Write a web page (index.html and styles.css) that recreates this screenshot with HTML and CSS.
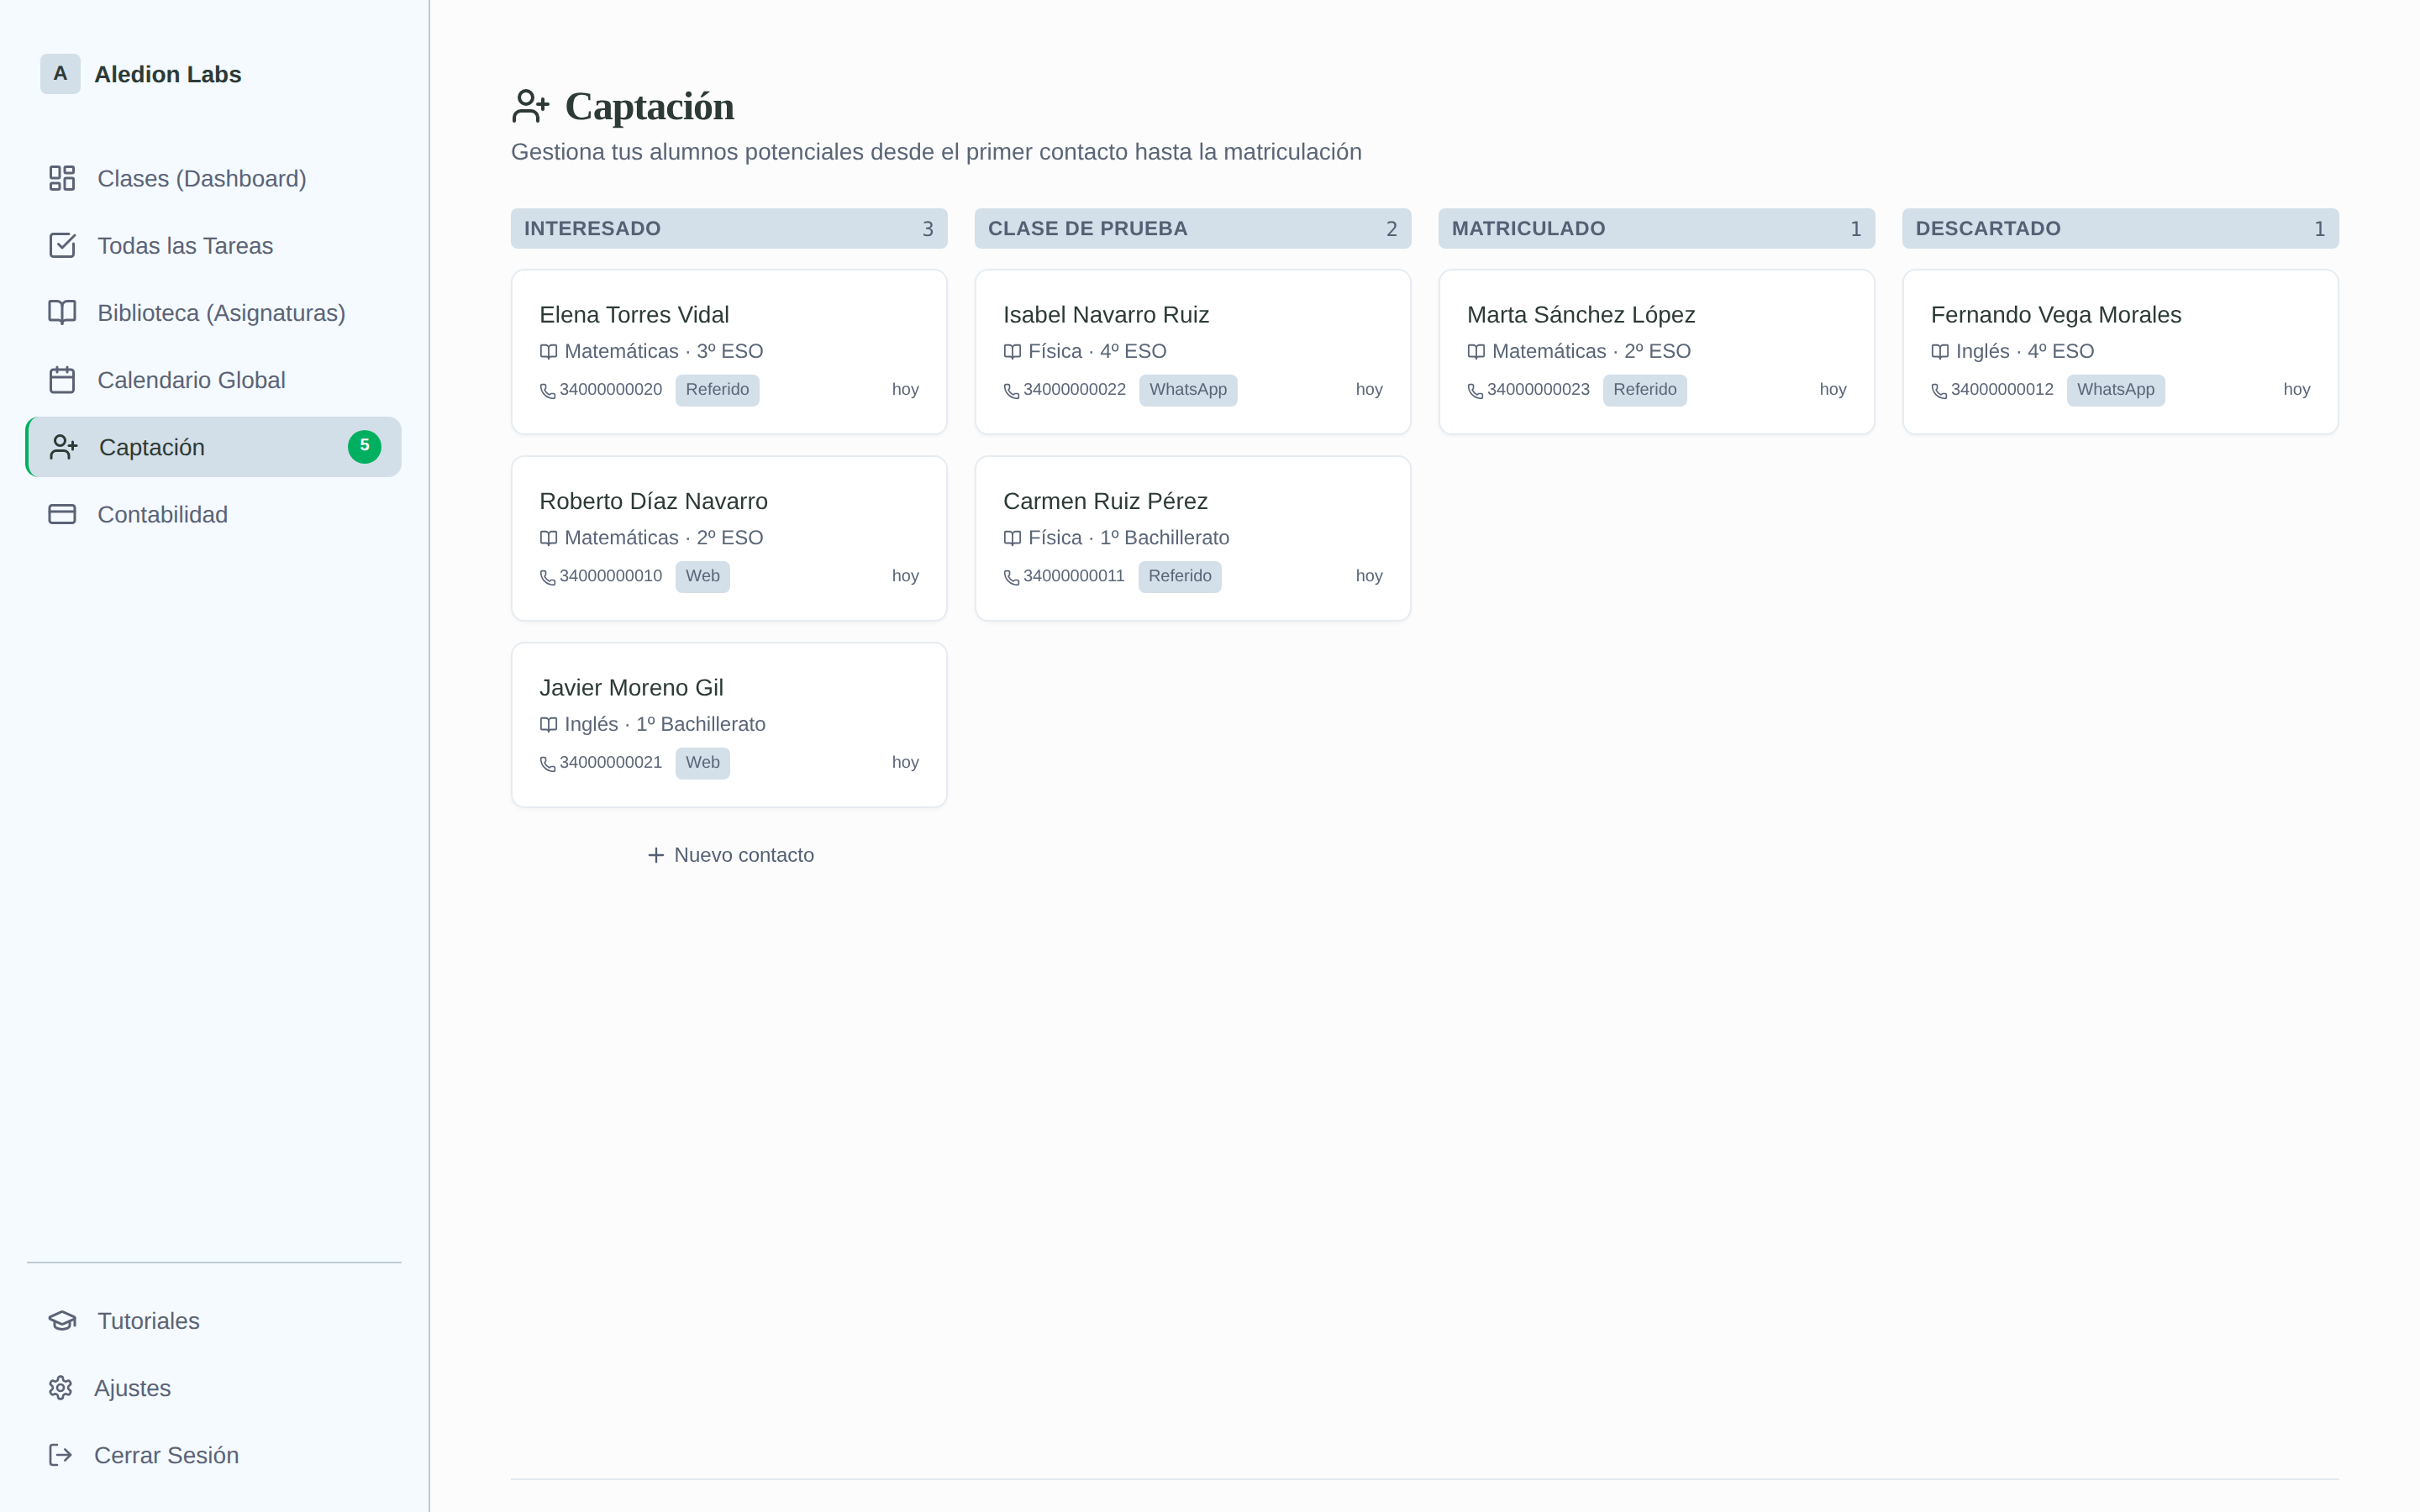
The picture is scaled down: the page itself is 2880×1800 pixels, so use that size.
FILE: index.html
```html
<!DOCTYPE html>
<html lang="es">
<head>
<meta charset="utf-8">
<title>Captación</title>
<link rel="stylesheet" href="styles.css">
</head>
<body>
<svg class="defs" xmlns="http://www.w3.org/2000/svg">
<symbol id="i-dash" viewBox="0 0 24 24"><rect x="3" y="3" width="7" height="9" rx="1"/><rect x="14" y="3" width="7" height="5" rx="1"/><rect x="14" y="12" width="7" height="9" rx="1"/><rect x="3" y="16" width="7" height="5" rx="1"/></symbol>
<symbol id="i-check" viewBox="0 0 24 24"><path d="M21 10.656V19a2 2 0 0 1-2 2H5a2 2 0 0 1-2-2V5a2 2 0 0 1 2-2h12.344"/><path d="m9 11 3 3L22 4"/></symbol>
<symbol id="i-book" viewBox="0 0 24 24"><path d="M12 7v14"/><path d="M3 18a1 1 0 0 1-1-1V4a1 1 0 0 1 1-1h5a4 4 0 0 1 4 4 4 4 0 0 1 4-4h5a1 1 0 0 1 1 1v13a1 1 0 0 1-1 1h-6a3 3 0 0 0-3 3 3 3 0 0 0-3-3z"/></symbol>
<symbol id="i-cal" viewBox="0 0 24 24"><path d="M8 2v4"/><path d="M16 2v4"/><rect x="3" y="4" width="18" height="18" rx="2"/><path d="M3 10h18"/></symbol>
<symbol id="i-user" viewBox="0 0 24 24"><path d="M16 21v-2a4 4 0 0 0-4-4H6a4 4 0 0 0-4 4v2"/><circle cx="9" cy="7" r="4"/><path d="M19 8v6"/><path d="M22 11h-6"/></symbol>
<symbol id="i-card" viewBox="0 0 24 24"><rect x="2" y="5" width="20" height="14" rx="2"/><path d="M2 10h20"/></symbol>
<symbol id="i-cap" viewBox="0 0 24 24"><path d="M21.42 10.922a1 1 0 0 0-.019-1.838L12.83 5.18a2 2 0 0 0-1.66 0L2.6 9.08a1 1 0 0 0 0 1.832l8.57 3.908a2 2 0 0 0 1.66 0z"/><path d="M22 10v6"/><path d="M6 12.5V16a6 3 0 0 0 12 0v-3.5"/></symbol>
<symbol id="i-gear" viewBox="0 0 24 24"><path d="M12.22 2h-.44a2 2 0 0 0-2 2v.18a2 2 0 0 1-1 1.73l-.43.25a2 2 0 0 1-2 0l-.15-.08a2 2 0 0 0-2.73.73l-.22.38a2 2 0 0 0 .73 2.73l.15.1a2 2 0 0 1 1 1.72v.51a2 2 0 0 1-1 1.74l-.15.09a2 2 0 0 0-.73 2.73l.22.38a2 2 0 0 0 2.73.73l.15-.08a2 2 0 0 1 2 0l.43.25a2 2 0 0 1 1 1.73V20a2 2 0 0 0 2 2h.44a2 2 0 0 0 2-2v-.18a2 2 0 0 1 1-1.73l.43-.25a2 2 0 0 1 2 0l.15.08a2 2 0 0 0 2.73-.73l.22-.39a2 2 0 0 0-.73-2.73l-.15-.08a2 2 0 0 1-1-1.74v-.5a2 2 0 0 1 1-1.74l.15-.09a2 2 0 0 0 .73-2.73l-.22-.38a2 2 0 0 0-2.73-.73l-.15.08a2 2 0 0 1-2 0l-.43-.25a2 2 0 0 1-1-1.73V4a2 2 0 0 0-2-2z"/><circle cx="12" cy="12" r="3"/></symbol>
<symbol id="i-out" viewBox="0 0 24 24"><path d="M9 21H5a2 2 0 0 1-2-2V5a2 2 0 0 1 2-2h4"/><path d="m16 17 5-5-5-5"/><path d="M21 12H9"/></symbol>
<symbol id="i-phone" viewBox="0 0 24 24"><path d="M13.832 16.568a1 1 0 0 0 1.213-.303l.355-.465A2 2 0 0 1 17 15h3a2 2 0 0 1 2 2v3a2 2 0 0 1-2 2A18 18 0 0 1 2 4a2 2 0 0 1 2-2h3a2 2 0 0 1 2 2v3a2 2 0 0 1-.8 1.6l-.468.351a1 1 0 0 0-.292 1.233 14 14 0 0 0 6.392 6.384"/></symbol>
<symbol id="i-plus" viewBox="0 0 24 24"><path d="M5 12h14"/><path d="M12 5v14"/></symbol>
</svg>
<div class="app">
<aside class="sidebar">
  <div class="brand"><span class="brand-mark">A</span><span class="brand-name">Aledion Labs</span></div>
  <nav class="nav">
    <a class="nav-item"><svg class="ico"><use href="#i-dash"/></svg><span class="label">Clases (Dashboard)</span></a>
    <a class="nav-item"><svg class="ico"><use href="#i-check"/></svg><span class="label">Todas las Tareas</span></a>
    <a class="nav-item"><svg class="ico"><use href="#i-book"/></svg><span class="label">Biblioteca (Asignaturas)</span></a>
    <a class="nav-item"><svg class="ico"><use href="#i-cal"/></svg><span class="label">Calendario Global</span></a>
    <a class="nav-item active"><svg class="ico"><use href="#i-user"/></svg><span class="label">Captación</span><b class="nav-badge">5</b></a>
    <a class="nav-item"><svg class="ico"><use href="#i-card"/></svg><span class="label">Contabilidad</span></a>
  </nav>
  <div class="side-foot">
    <a class="nav-item"><svg class="ico"><use href="#i-cap"/></svg><span class="label">Tutoriales</span></a>
    <a class="nav-item small"><svg class="ico"><use href="#i-gear"/></svg><span class="label">Ajustes</span></a>
    <a class="nav-item small"><svg class="ico"><use href="#i-out"/></svg><span class="label">Cerrar Sesión</span></a>
  </div>
</aside>
<main class="main">
  <header class="head">
    <h1 class="title"><svg class="title-ico"><use href="#i-user"/></svg><span class="title-text">Captación</span></h1>
    <p class="sub">Gestiona tus alumnos potenciales desde el primer contacto hasta la matriculación</p>
  </header>
  <section class="board">
    <div class="col">
      <div class="col-head"><span class="col-name">Interesado</span><span class="col-count">3</span></div>
      <article class="card"><h3 class="name">Elena Torres Vidal</h3><div class="meta"><svg class="meta-ico"><use href="#i-book"/></svg><span>Matemáticas · 3º ESO</span></div><div class="row"><span class="tel"><svg class="tel-ico"><use href="#i-phone"/></svg>34000000020</span><span class="tag">Referido</span><span class="when">hoy</span></div></article>
      <article class="card"><h3 class="name">Roberto Díaz Navarro</h3><div class="meta"><svg class="meta-ico"><use href="#i-book"/></svg><span>Matemáticas · 2º ESO</span></div><div class="row"><span class="tel"><svg class="tel-ico"><use href="#i-phone"/></svg>34000000010</span><span class="tag">Web</span><span class="when">hoy</span></div></article>
      <article class="card"><h3 class="name">Javier Moreno Gil</h3><div class="meta"><svg class="meta-ico"><use href="#i-book"/></svg><span>Inglés · 1º Bachillerato</span></div><div class="row"><span class="tel"><svg class="tel-ico"><use href="#i-phone"/></svg>34000000021</span><span class="tag">Web</span><span class="when">hoy</span></div></article>
      <button class="add"><svg class="add-ico"><use href="#i-plus"/></svg><span>Nuevo contacto</span></button>
    </div>
    <div class="col">
      <div class="col-head"><span class="col-name">Clase de prueba</span><span class="col-count">2</span></div>
      <article class="card"><h3 class="name">Isabel Navarro Ruiz</h3><div class="meta"><svg class="meta-ico"><use href="#i-book"/></svg><span>Física · 4º ESO</span></div><div class="row"><span class="tel"><svg class="tel-ico"><use href="#i-phone"/></svg>34000000022</span><span class="tag">WhatsApp</span><span class="when">hoy</span></div></article>
      <article class="card"><h3 class="name">Carmen Ruiz Pérez</h3><div class="meta"><svg class="meta-ico"><use href="#i-book"/></svg><span>Física · 1º Bachillerato</span></div><div class="row"><span class="tel"><svg class="tel-ico"><use href="#i-phone"/></svg>34000000011</span><span class="tag">Referido</span><span class="when">hoy</span></div></article>
    </div>
    <div class="col">
      <div class="col-head"><span class="col-name">Matriculado</span><span class="col-count">1</span></div>
      <article class="card"><h3 class="name">Marta Sánchez López</h3><div class="meta"><svg class="meta-ico"><use href="#i-book"/></svg><span>Matemáticas · 2º ESO</span></div><div class="row"><span class="tel"><svg class="tel-ico"><use href="#i-phone"/></svg>34000000023</span><span class="tag">Referido</span><span class="when">hoy</span></div></article>
    </div>
    <div class="col">
      <div class="col-head"><span class="col-name">Descartado</span><span class="col-count">1</span></div>
      <article class="card"><h3 class="name">Fernando Vega Morales</h3><div class="meta"><svg class="meta-ico"><use href="#i-book"/></svg><span>Inglés · 4º ESO</span></div><div class="row"><span class="tel"><svg class="tel-ico"><use href="#i-phone"/></svg>34000000012</span><span class="tag">WhatsApp</span><span class="when">hoy</span></div></article>
    </div>
  </section>
  <footer class="foot"></footer>
</main>
</div>
</body>
</html>
```
FILE: styles.css
```css
* { box-sizing: border-box; }
html, body { margin: 0; height: 100%; }
body { font-family: "Liberation Sans", Arial, sans-serif; background: #fcfcfc; color: #2d3a35; text-rendering: geometricPrecision; }
.defs { display: none; }
svg { fill: none; stroke: currentColor; stroke-width: 2; stroke-linecap: round; stroke-linejoin: round; flex: none; }
.app { display: flex; height: 1800px; overflow: hidden; }

.sidebar { width: 512px; flex: none; display: flex; flex-direction: column; background: #f4faff; border-right: 2px solid #bccbd8; padding: 64px 32px 0; }
.brand { display: flex; align-items: center; gap: 16px; padding-left: 16px; height: 48px; margin-bottom: 64px; }
.brand-mark { width: 48px; height: 48px; border-radius: 8px; background: #d3dfe8; display: flex; align-items: center; justify-content: center; font-weight: 700; font-size: 24px; }
.brand-name { font-weight: 700; font-size: 28px; padding-top: 2px; }
.nav { display: flex; flex-direction: column; gap: 8px; }
.nav-item { display: flex; align-items: center; gap: 24px; height: 72px; padding: 0 24px; font-size: 28px; color: #5b6376; border-radius: 16px; }
.label { padding-top: 2px; }
.ico { width: 36px; height: 36px; }
.nav-item.small .ico { width: 32px; height: 32px; }
.nav-item.active { background: #d3dfe8; color: #2d3a35; border-left: 4px solid #00b060; margin-left: -2px; }
.nav-badge { margin-left: auto; width: 40px; height: 40px; border-radius: 50%; background: #00b060; color: #fff; font-size: 20px; display: flex; align-items: center; justify-content: center; padding-bottom: 4px; }
.side-foot { margin-top: auto; border-top: 2px solid #bccbd8; padding-top: 32px; padding-bottom: 32px; display: flex; flex-direction: column; gap: 8px; }

.main { flex: 1; min-width: 0; padding: 94px 96px 38px; display: flex; flex-direction: column; }
.head { margin-bottom: 47px; will-change: transform; }
.title { margin: 0 0 3px; height: 64px; display: flex; align-items: center; gap: 16px; font-family: "Liberation Serif", "Times New Roman", serif; font-weight: 700; font-size: 48px; line-height: 62px; letter-spacing: -1px; }
.title-text { padding-top: 2px; }
.title-ico { width: 48px; height: 48px; }
.sub { margin: 0; font-size: 28px; line-height: 40px; color: #5a6577; }
.board { flex: 1; display: grid; grid-template-columns: repeat(4, 520px); gap: 32px; align-items: start; will-change: transform; }
.col { display: flex; flex-direction: column; gap: 24px; }
.col-head { height: 48px; display: flex; align-items: center; justify-content: space-between; padding: 2px 16px 0; background: #d3dfe9; border-radius: 8px; color: #556074; }
.col-name { font-weight: 700; font-size: 24px; letter-spacing: 0.6px; text-transform: uppercase; }
.col-count { font-family: "DejaVu Sans Mono", monospace; font-size: 24px; }
.card { background: #fff; border: 2px solid #e6ecf1; border-radius: 16px; padding: 32px; box-shadow: 0 2px 4px rgba(0, 0, 0, 0.04); }
.name { margin: 0 0 4px; font-weight: 400; font-size: 28px; line-height: 42px; color: #2d3a35; }
.meta { display: flex; align-items: center; gap: 8px; font-size: 24px; line-height: 36px; color: #5a6577; padding-top: 1px; margin-bottom: 9px; }
.meta-ico { width: 22px; height: 22px; }
.row { display: flex; align-items: center; gap: 16px; font-size: 20px; line-height: 28px; color: #5a6577; }
.tel { display: block; padding-bottom: 2px; }
.tel-ico { width: 20px; height: 20px; margin-right: 4px; vertical-align: -6px; }
.tag { background: #d3dfe9; border-radius: 8px; padding: 0 12px; height: 38px; line-height: 36px; }
.when { margin-left: auto; padding-bottom: 2px; }
.add { display: flex; align-items: center; justify-content: center; gap: 8px; height: 64px; border: 0; background: none; font: inherit; font-size: 24px; color: #556074; }
.add-ico { width: 28px; height: 28px; }
.foot { border-top: 2px solid #e3e9ee; height: 0; }
```
